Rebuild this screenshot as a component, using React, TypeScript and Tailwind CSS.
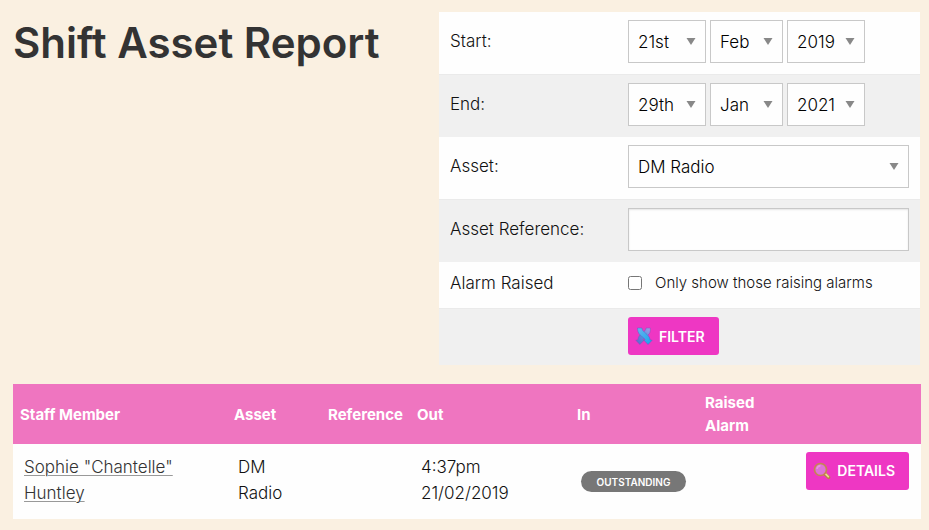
import type { ReactNode } from "react";

const days = ["21st", "29th"];
const months = ["Jan", "Feb"];
const years = ["2019", "2021"];

function Select({
  label,
  id,
  value,
  options,
  className,
}: {
  label?: string;
  id: string;
  value: string;
  options: string[];
  className: string;
}) {
  return (
    <div className={`relative ${className}`}>
      <select
        id={id}
        aria-label={label}
        defaultValue={value}
        className="block h-[43px] w-full appearance-none border border-[#c8c8c8] bg-[#fefefe] pt-[2px] pl-[9px] text-[17px] font-light text-black"
      >
        {options.map((option) => (
          <option key={option}>{option}</option>
        ))}
      </select>
      <svg
        viewBox="0 0 10 7"
        className="pointer-events-none absolute top-[18px] right-[10px] h-[7px] w-[10px]"
        fill="#888888"
      >
        <path d="M0.5 0h9L5 7z" />
      </svg>
    </div>
  );
}

function DateFields({ name, day, month, year }: { name: string; day: string; month: string; year: string }) {
  const id = name.toLowerCase();
  return (
    <div className="flex gap-1">
      <Select id={id} value={day} options={days} className="w-[78px]" />
      <Select id={`${id}-month`} label={`${name} month`} value={month} options={months} className="w-[73px]" />
      <Select id={`${id}-year`} label={`${name} year`} value={year} options={years} className="w-[78px]" />
    </div>
  );
}

function Row({ label, htmlFor, children }: { label: string; htmlFor: string; children: ReactNode }) {
  return (
    <div className="flex px-[11px] pt-2 pb-[11px] odd:bg-[#fefefe] even:border-t even:border-[#eaeaea] even:bg-[#f0f0f0]">
      <label htmlFor={htmlFor} className="w-[178px] shrink-0 pt-2 text-[17px] leading-[26px] font-light">
        {label}
      </label>
      <div className="min-w-0 flex-1">{children}</div>
    </div>
  );
}

function ArrowsIcon() {
  return (
    <svg viewBox="0 0 18 18" className="size-[18px]">
      <defs>
        <linearGradient id="arrow-a" x1="0" y1="0" x2="1" y2="1">
          <stop offset="0" stopColor="#6ab4ee" />
          <stop offset="1" stopColor="#12a4ee" />
        </linearGradient>
        <linearGradient id="arrow-b" x1="1" y1="0" x2="0" y2="1">
          <stop offset="0" stopColor="#a79be6" />
          <stop offset="0.5" stopColor="#5c8edb" />
          <stop offset="1" stopColor="#5c63cf" />
        </linearGradient>
      </defs>
      <path
        d="M11 1h4.300v2.500c0 2.700-1.800 4.200-3.600 5.700C9.600 10.900 8.300 11.600 8 13l1 .3L4.800 17.500.800 13.200l2-.2c.2-3.500 2.200-5.100 4.400-6.900C9.300 4.400 10.700 3.500 11 1z"
        fill="url(#arrow-b)"
        stroke="#8450b9"
        strokeWidth="0.5"
      />
      <path
        d="M2.500 1h4.400c.3 2.500 1.700 3.400 3.600 5.100 2.200 1.900 4.300 3.500 4.700 6.900l2 .2-4.200 4.300L9 13.300l1-.3c-.3-1.500-1.700-2.300-3.500-3.800C4.300 7.400 2.500 5.600 2.500 1z"
        fill="url(#arrow-a)"
        stroke="#5a5cc4"
        strokeWidth="0.5"
      />
    </svg>
  );
}

function MagnifierIcon() {
  return (
    <svg viewBox="0 0 18 18" className="size-[18px]">
      <path d="M11.500 11.500l4 3.800" stroke="#b98545" strokeWidth="3.600" strokeLinecap="round" />
      <path d="M12.800 12.200l2.500 2.400" stroke="#ecd98e" strokeWidth="1.800" strokeLinecap="round" />
      <circle cx="7.500" cy="7.500" r="6" fill="#df72d9" stroke="#c58550" strokeWidth="1.700" />
      <path d="M4 7a3.700 3.700 0 0 1 3.500-3.300" stroke="#e997e2" strokeWidth="1.400" fill="none" />
    </svg>
  );
}

function Button({ icon, type, children }: { icon: ReactNode; type: "submit" | "button"; children: string }) {
  return (
    <button
      type={type}
      className="inline-flex h-[38px] items-center gap-[6px] rounded-[3px] bg-[#ee37c3] pr-[14px] pl-[7px] text-[14px] font-semibold text-white uppercase"
    >
      {icon}
      {children}
    </button>
  );
}

const headings = ["Staff Member", "Asset", "Reference", "Out", "In", "Raised Alarm", ""];

export default function App() {
  return (
    <div className="min-h-screen bg-[#faf0e1] pt-3 pr-2 pb-[11px] pl-[13px] font-['Inter',sans-serif] text-[#111]">
      <div className="grid grid-cols-[426fr_481fr] items-start pr-px">
        <h1 className="pt-1 text-[42px] leading-[54px] font-semibold text-[#333]">Shift Asset Report</h1>

        <form onSubmit={(e) => e.preventDefault()}>
          <Row label="Start:" htmlFor="start">
            <DateFields name="Start" day="21st" month="Feb" year="2019" />
          </Row>
          <Row label="End:" htmlFor="end">
            <DateFields name="End" day="29th" month="Jan" year="2021" />
          </Row>
          <Row label="Asset:" htmlFor="asset">
            <Select id="asset" value="DM Radio" options={["DM Radio"]} className="w-full" />
          </Row>
          <Row label="Asset Reference:" htmlFor="reference">
            <input
              id="reference"
              type="text"
              className="block h-[43px] w-full border border-[#c8c8c8] bg-[#fefefe] px-[9px] text-[17px] font-light shadow-[inset_0_1px_2px_rgba(0,0,0,0.1)]"
            />
          </Row>
          <div className="flex bg-[#fefefe] px-[11px] pt-2 pb-3">
            <span className="w-[178px] shrink-0 text-[17px] leading-[26px] font-light">Alarm Raised</span>
            <label className="flex items-center gap-[13px] text-[15px] leading-[26px] font-light">
              <input type="checkbox" className="size-[14px]" />
              Only show those raising alarms
            </label>
          </div>
          <div className="border-t border-[#eaeaea] bg-[#f0f0f0] pt-2 pr-[11px] pb-[10px] pl-[189px]">
            <Button type="submit" icon={<ArrowsIcon />}>
              Filter
            </Button>
          </div>
        </form>
      </div>

      <table className="mt-[19px] w-full table-fixed text-left">
        <colgroup>
          <col className="w-[214px]" />
          <col className="w-[94px]" />
          <col className="w-[89px]" />
          <col className="w-[160px]" />
          <col className="w-[128px]" />
          <col className="w-[97px]" />
          <col className="w-[126px]" />
        </colgroup>
        <thead>
          <tr className="bg-[#ef75c0] text-[15px] leading-[23px] font-bold text-white">
            {headings.map((heading) => (
              <th key={heading} className="py-[7px] pl-[7px]">
                {heading}
              </th>
            ))}
          </tr>
        </thead>
        <tbody>
          <tr className="bg-[#fefefe] align-top text-[17px] leading-[26px] font-light">
            <td className="pt-[10px] pb-[13px] pl-[11px]">
              <a href="#staff" className="text-[#333] underline decoration-[#999] decoration-1 underline-offset-2">
                Sophie "Chantelle" Huntley
              </a>
            </td>
            <td className="px-[11px] pt-[10px]">DM Radio</td>
            <td />
            <td className="pt-[10px] pl-[11px]">
              4:37pm
              <br />
              21/02/2019
            </td>
            <td className="pl-[11px] align-middle">
              <span className="flex h-[21px] w-[105px] items-center justify-center rounded-full bg-[#777] text-[10px] font-semibold text-white uppercase">
                Outstanding
              </span>
            </td>
            <td />
            <td className="pt-2 pr-3 text-right">
              <Button type="button" icon={<MagnifierIcon />}>
                Details
              </Button>
            </td>
          </tr>
        </tbody>
      </table>
    </div>
  );
}
